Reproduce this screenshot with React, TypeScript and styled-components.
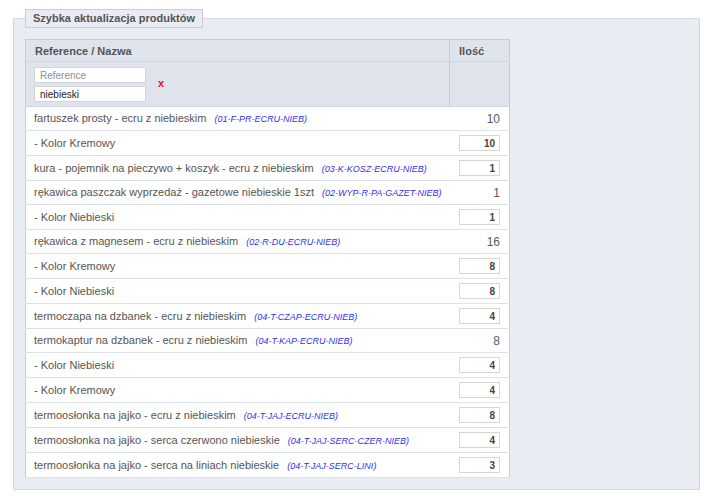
import React from 'react'
import styled, { createGlobalStyle } from 'styled-components'

const GlobalStyle = createGlobalStyle`
  html, body {
    margin: 0;
    padding: 0;
    background: #ffffff;
    font-family: "Liberation Sans", Arial, sans-serif;
    color: #555555;
  }
`

const Page = styled.div`
  padding: 9px 10px 0 13px;
  width: 687px;
`

const Box = styled.fieldset`
  margin: 0;
  padding: 11px 11px 11px 11px;
  border: 1px solid #d3d7df;
  background: #e9ecf3;
  min-width: 0;
`

const Title = styled.legend`
  padding: 0 7px;
  height: 17px;
  line-height: 17px;
  border: 1px solid #c9cdd5;
  background: #e9ecf3;
  font-size: 11px;
  font-weight: bold;
  color: #555555;
`

const Grid = styled.table`
  width: 485px;
  border-collapse: collapse;
  border: 1px solid #c6cdd8;
  font-size: 11px;
`

const HeadCell = styled.th<{ narrow?: boolean }>`
  height: 21px;
  padding: 0 9px;
  text-align: left;
  font-weight: bold;
  font-size: 11px;
  color: #555555;
  background: #dfe4ec;
  border-left: ${({ narrow }) => (narrow ? '1px solid #c6cdd8' : '0')};
  border-bottom: 1px solid #cfd5df;
  width: ${({ narrow }) => (narrow ? '41px' : 'auto')};
`

const FilterCell = styled.td<{ narrow?: boolean }>`
  padding: 5px 9px 4px 8px;
  background: #dfe4ec;
  border-left: ${({ narrow }) => (narrow ? '1px solid #c6cdd8' : '0')};
  border-bottom: 1px solid #cfd5df;
`

const FilterWrap = styled.div`
  display: flex;
  align-items: center;
  gap: 12px;
`

const FilterFields = styled.div`
  display: flex;
  flex-direction: column;
  gap: 3px;
`

const FilterInput = styled.input`
  box-sizing: border-box;
  width: 112px;
  height: 16px;
  margin: 0;
  padding: 0 5px;
  border: 1px solid #d2d5da;
  background: #ffffff;
  font-family: "Liberation Sans", Arial, sans-serif;
  font-size: 10px;
  color: #222222;
  outline: none;
  &::placeholder {
    color: #8f8f8f;
  }
`

const Clear = styled.span`
  color: #e01818;
  font-weight: bold;
  font-size: 11px;
  line-height: 11px;
  margin-top: -2px;
`

const Row = styled.tr`
  background: #ffffff;
  border-bottom: 1px solid #dde2e9;
`

const NameCell = styled.td`
  padding: 4px 8px;
  line-height: 14px;
  color: #555555;
  white-space: nowrap;
`

const Sku = styled.span`
  margin-left: 8px;
  font-size: 9px;
  font-style: italic;
  color: #3030f0;
`

const QtyCell = styled.td`
  padding: 4px 9px 4px 0;
  text-align: right;
  line-height: 14px;
  color: #5a5a5a;
  font-size: 12px;
`

const QtyInput = styled.input`
  box-sizing: border-box;
  display: block;
  margin-left: auto;
  width: 41px;
  height: 16px;
  padding: 0 4px;
  border: 1px solid #d6d6d6;
  background: #ffffff;
  text-align: right;
  font-family: "Liberation Sans", Arial, sans-serif;
  font-size: 10px;
  font-weight: bold;
  color: #444444;
  outline: none;
`

type Item = { name: string; sku?: string; qty: number; edit?: boolean }

const items: Item[] = [
  { name: 'fartuszek prosty - ecru z niebieskim', sku: '01-F-PR-ECRU-NIEB', qty: 10 },
  { name: '- Kolor Kremowy', qty: 10, edit: true },
  { name: 'kura - pojemnik na pieczywo + koszyk - ecru z niebieskim', sku: '03-K-KOSZ-ECRU-NIEB', qty: 1, edit: true },
  { name: 'rękawica paszczak wyprzedaż - gazetowe niebieskie 1szt', sku: '02-WYP-R-PA-GAZET-NIEB', qty: 1 },
  { name: '- Kolor Niebieski', qty: 1, edit: true },
  { name: 'rękawica z magnesem - ecru z niebieskim', sku: '02-R-DU-ECRU-NIEB', qty: 16 },
  { name: '- Kolor Kremowy', qty: 8, edit: true },
  { name: '- Kolor Niebieski', qty: 8, edit: true },
  { name: 'termoczapa na dzbanek - ecru z niebieskim', sku: '04-T-CZAP-ECRU-NIEB', qty: 4, edit: true },
  { name: 'termokaptur na dzbanek - ecru z niebieskim', sku: '04-T-KAP-ECRU-NIEB', qty: 8 },
  { name: '- Kolor Niebieski', qty: 4, edit: true },
  { name: '- Kolor Kremowy', qty: 4, edit: true },
  { name: 'termoosłonka na jajko - ecru z niebieskim', sku: '04-T-JAJ-ECRU-NIEB', qty: 8, edit: true },
  { name: 'termoosłonka na jajko - serca czerwono niebieskie', sku: '04-T-JAJ-SERC-CZER-NIEB', qty: 4, edit: true },
  { name: 'termoosłonka na jajko - serca na liniach niebieskie', sku: '04-T-JAJ-SERC-LINI', qty: 3, edit: true },
]

export default function App() {
  return (
    <>
      <GlobalStyle />
      <Page>
        <Box>
          <Title>Szybka aktualizacja produktów</Title>
          <Grid>
            <thead>
              <tr>
                <HeadCell>Reference / Nazwa</HeadCell>
                <HeadCell narrow>Ilość</HeadCell>
              </tr>
              <tr>
                <FilterCell>
                  <FilterWrap>
                    <FilterFields>
                      <FilterInput placeholder="Reference" />
                      <FilterInput defaultValue="niebieski" />
                    </FilterFields>
                    <Clear>x</Clear>
                  </FilterWrap>
                </FilterCell>
                <FilterCell narrow />
              </tr>
            </thead>
            <tbody>
              {items.map((it, i) => (
                <Row key={i}>
                  <NameCell>
                    {it.name}
                    {it.sku && <Sku>({it.sku})</Sku>}
                  </NameCell>
                  <QtyCell>
                    {it.edit ? <QtyInput defaultValue={it.qty} /> : it.qty}
                  </QtyCell>
                </Row>
              ))}
            </tbody>
          </Grid>
        </Box>
      </Page>
    </>
  )
}
